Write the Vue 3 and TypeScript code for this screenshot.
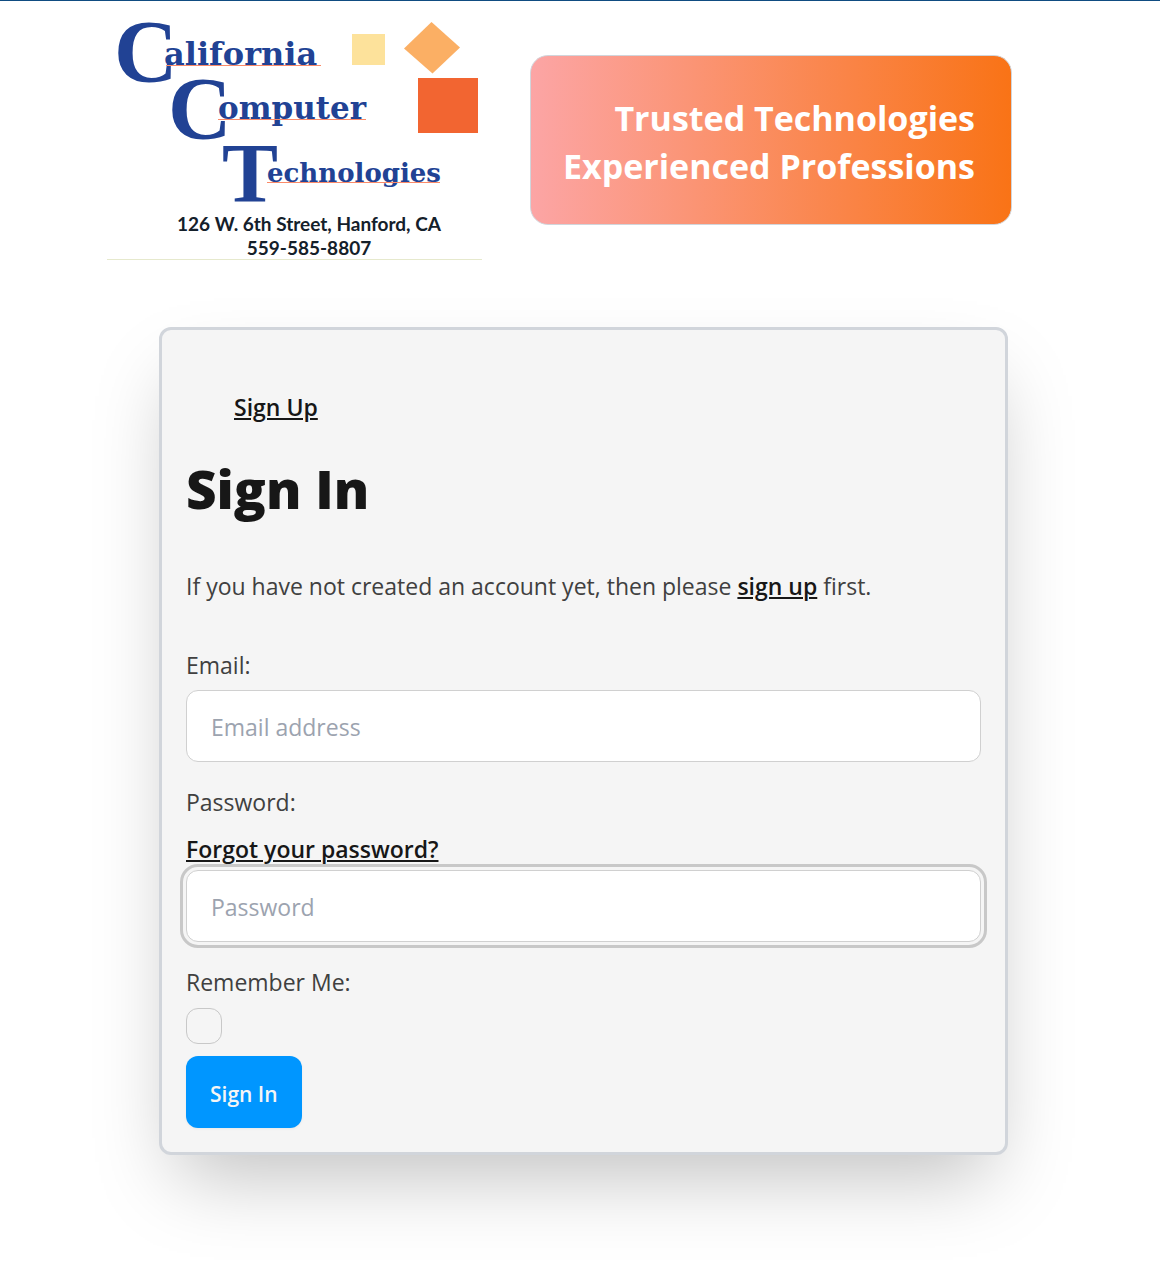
<script setup lang="ts">
import { ref } from 'vue'

const email = ref('')
const password = ref('')
const remember = ref(false)
</script>

<template>
  <div class="page">
    <header class="masthead">
      <svg class="logo" viewBox="0 0 375 240" role="img" aria-label="California Computer Technologies">
        <g class="logo-initial">
          <text x="7" y="61">C</text>
          <text x="61" y="118">C</text>
          <text class="logo-t" x="115" y="182">T</text>
        </g>
        <g class="logo-word">
          <text font-size="32" x="57" y="45">alifornia</text>
          <text font-size="31" x="111" y="99">omputer</text>
          <text font-size="26" x="160" y="162">echnologies</text>
        </g>
        <g fill="#fb8a68">
          <rect x="59" y="45" width="155" height="1" />
          <rect x="111" y="99" width="148" height="1" />
          <rect x="160" y="162" width="173" height="1" />
        </g>
        <rect x="245" y="14" width="33" height="31" fill="#fde29b" />
        <path d="M324.500 2 353 27.500 325.500 53.500 297 28.500z" fill="#fbaf64" />
        <rect x="311" y="58" width="60" height="55" fill="#f26531" />
        <g class="logo-address">
          <text x="202" y="211">126 W. 6th Street, Hanford, CA</text>
          <text x="202" y="235">559-585-8807</text>
        </g>
        <rect x="0" y="239" width="375" height="1" fill="#e6e9cd" />
      </svg>
      <div class="banner">
        Trusted Technologies<br />
        Experienced Professions
      </div>
    </header>

    <main class="content">
      <section class="card">
        <nav class="card-nav"><a class="link" href="#sign-up">Sign Up</a></nav>
        <h1>Sign In</h1>
        <p>If you have not created an account yet, then please <a class="link" href="#sign-up">sign up</a> first.</p>
        <form @submit.prevent>
          <div class="field">
            <label for="email">Email:</label>
            <input id="email" v-model="email" class="text-input" type="email" placeholder="Email address" />
          </div>
          <div class="field">
            <label for="password">Password:</label>
            <a class="link forgot" href="#reset">Forgot your password?</a>
            <input id="password" v-model="password" class="text-input active" type="password" placeholder="Password" />
          </div>
          <div class="field">
            <label for="remember">Remember Me:</label>
            <input id="remember" v-model="remember" class="checkbox" type="checkbox" />
          </div>
          <button type="submit">Sign In</button>
        </form>
      </section>
    </main>
  </div>
</template>

<style>
body {
  margin: 0;
  background: #fff;
}
</style>

<style scoped>
.page {
  border-top: 1px solid #0f4c81;
  padding-bottom: 114px;
  font-family: "Segoe UI", "Open Sans", "Noto Sans", sans-serif;
  font-size: 23px;
  line-height: 36px;
  color: #404040;
}
.page * {
  box-sizing: border-box;
}
.masthead {
  display: flex;
  justify-content: center;
  align-items: center;
  gap: 48px;
  padding: 19px 41px 0 0;
}
.logo {
  flex: 0 1 375px;
  min-width: 0;
  overflow: visible;
}
.logo-initial {
  font: bold 88px "Liberation Serif", serif;
  fill: #214294;
}
.logo-t {
  font-size: 84px;
}
.logo-word {
  font-family: "DejaVu Serif", serif;
  font-weight: bold;
  fill: #214294;
}
.logo-address {
  font: bold 19px Lato, sans-serif;
  fill: #14202a;
  text-anchor: middle;
}
.banner {
  flex: 0 1 482px;
  padding: 38px 36px 34px 12px;
  border: 1px solid #d1d5db;
  border-radius: 18px;
  background: linear-gradient(to right, #fca5a5, #f97316);
  color: #fff;
  font-size: 34px;
  font-weight: 700;
  line-height: 48px;
  text-align: right;
}
.content {
  padding: 67px 0 0 7px;
}
.card {
  max-width: 849px;
  margin: 0 auto;
  padding: 24px;
  border: 3px solid #d1d5db;
  border-radius: 12px;
  background: #f5f5f5;
  box-shadow: 0 38px 75px -18px rgba(0, 0, 0, 0.25);
}
.card-nav {
  padding: 35px 48px 0;
}
.link {
  color: #171717;
  font-weight: 600;
  text-decoration: underline;
  text-decoration-thickness: 2px;
  text-underline-offset: 2px;
}
h1 {
  margin: 34px 0 49px;
  color: #171717;
  font-size: 53px;
  font-weight: 800;
  line-height: 60px;
}
p {
  margin: 0 0 43px;
}
.field {
  display: flex;
  flex-direction: column;
  align-items: flex-start;
  margin-bottom: 22px;
}
label {
  margin-bottom: 7px;
}
.forgot {
  margin: 4px 0 3px;
}
.text-input {
  width: 100%;
  height: 72px;
  padding: 2px 24px 0;
  border: 1px solid #d0d0d0;
  border-radius: 12px;
  background: #fff;
  color: #404040;
  font: inherit;
}
.text-input::placeholder {
  color: #9ca3af;
  opacity: 1;
}
.text-input.active {
  outline: 3px solid #c8c8c8;
  outline-offset: 3px;
}
.checkbox {
  appearance: none;
  width: 36px;
  height: 36px;
  margin: 1px 0 -10px;
  border: 1px solid #c8c8c8;
  border-radius: 12px;
}
.checkbox:checked {
  background: #0096ff;
}
button {
  display: block;
  height: 72px;
  padding: 4px 24px 0;
  border: 0;
  border-radius: 12px;
  background: #0096ff;
  box-shadow: 0 1px 3px rgba(0, 0, 0, 0.05);
  color: #f5f5f5;
  font: inherit;
  font-size: 21px;
  font-weight: 600;
}
</style>
